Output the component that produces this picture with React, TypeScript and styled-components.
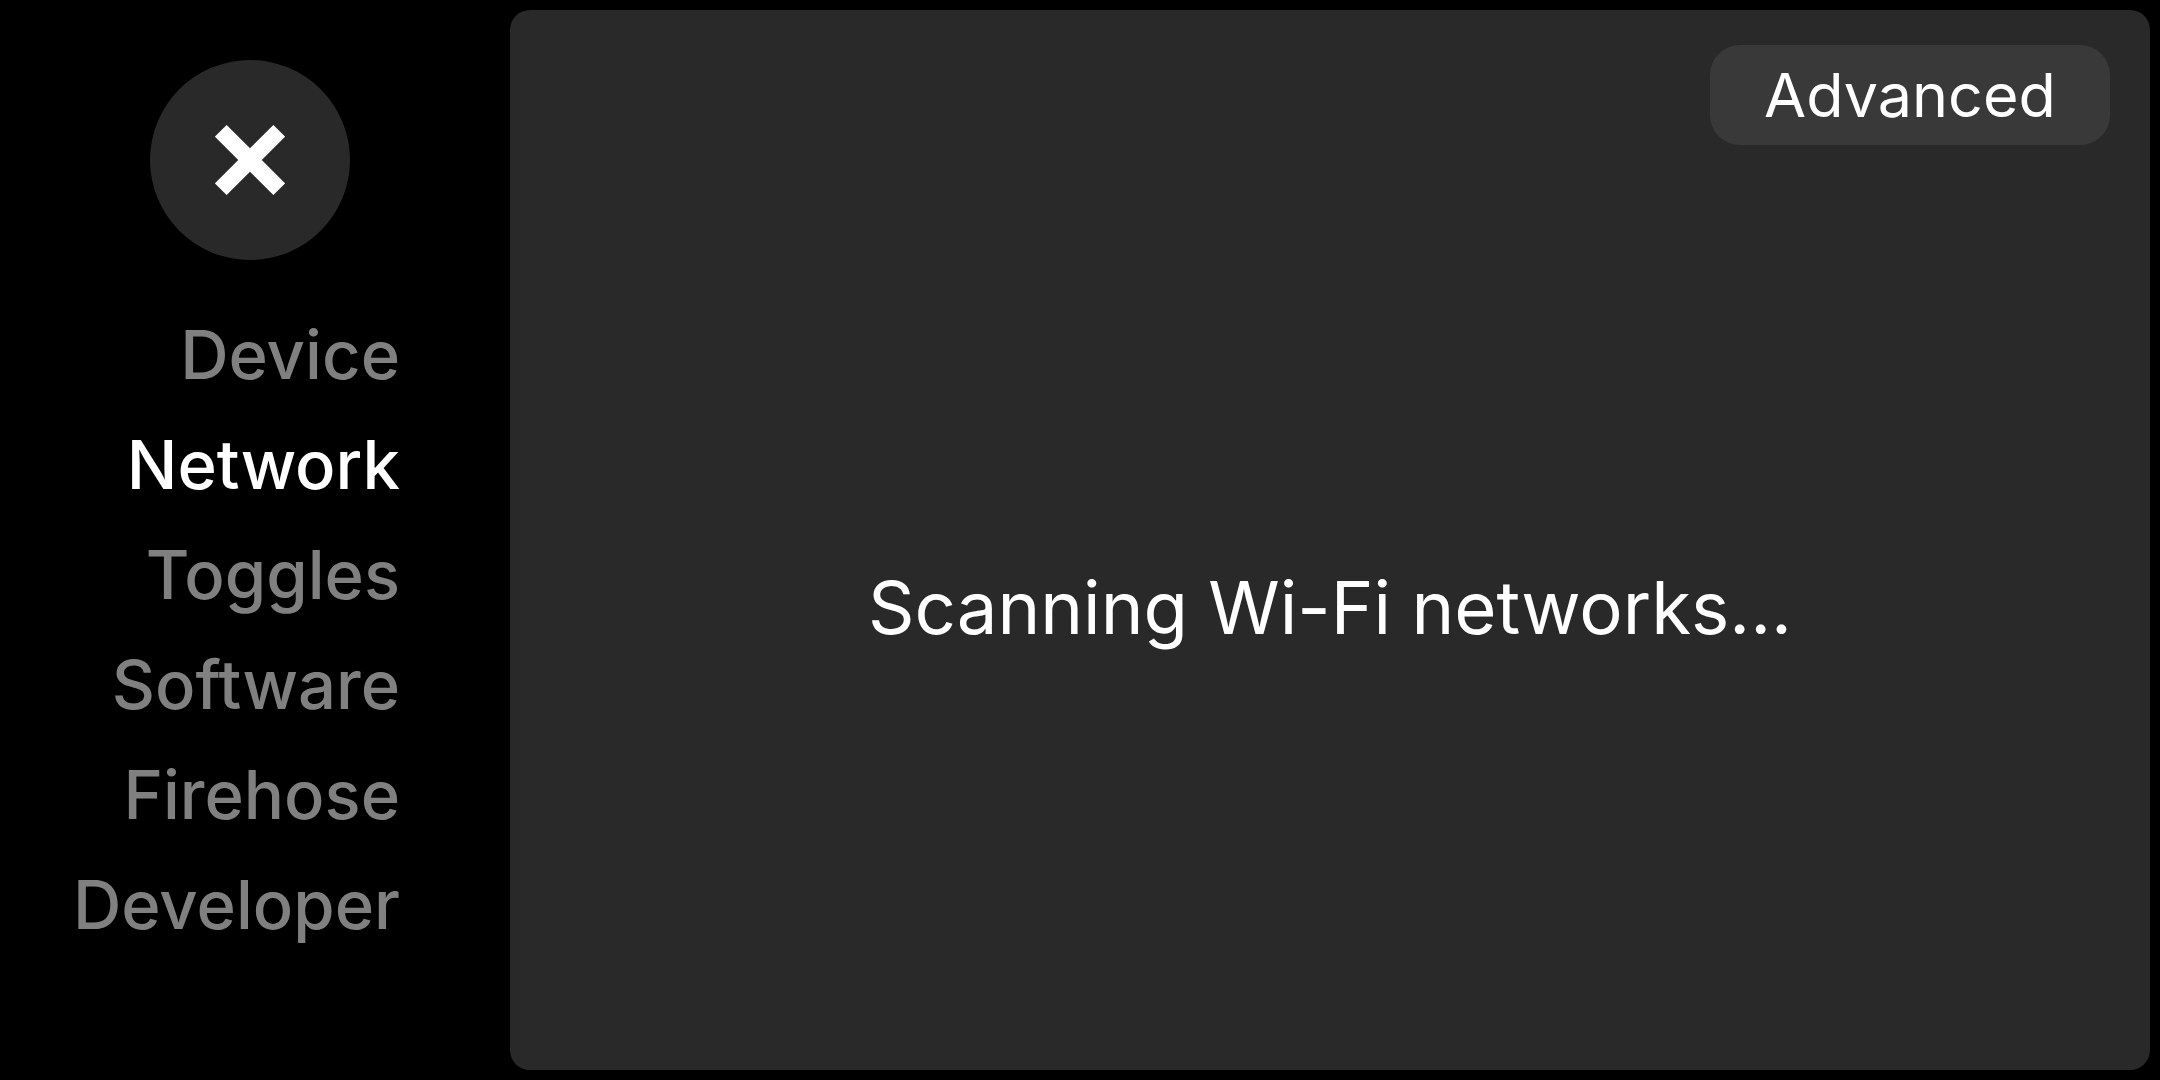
import styled, { createGlobalStyle } from "styled-components";

const GlobalStyle = createGlobalStyle`
  html, body {
    margin: 0;
    padding: 0;
    background: #000;
    font-family: Inter, "Noto Sans", sans-serif;
  }
`;

const NAV_ITEMS = ["Device", "Network", "Toggles", "Software", "Firehose", "Developer"];

const CloseIcon = () => (
  <svg width="70" height="70" viewBox="0 0 70 70">
    <path
      d="M5.8 5.8 L64.2 64.2 M64.2 5.8 L5.8 64.2"
      stroke="#fff"
      strokeWidth="16.5"
      strokeLinecap="butt"
    />
  </svg>
);

const App = () => {
  const active = "Network";

  return (
    <>
      <GlobalStyle />
      <Screen>
        <Sidebar>
          <CloseButton aria-label="Close">
            <CloseIcon />
          </CloseButton>
          <Nav>
            {NAV_ITEMS.map((item) => (
              <NavItem key={item} $active={item === active}>
                {item}
              </NavItem>
            ))}
          </Nav>
        </Sidebar>
        <Panel>
          <PanelHeader>
            <AdvancedButton>Advanced</AdvancedButton>
          </PanelHeader>
          <PanelBody>
            <Status>Scanning Wi-Fi networks...</Status>
          </PanelBody>
        </Panel>
      </Screen>
    </>
  );
};

export default App;

const Screen = styled.div`
  display: flex;
  width: 2160px;
  height: 1080px;
  background: #000;
  box-sizing: border-box;
  padding: 10px 10px 10px 0;
`;

const Sidebar = styled.div`
  width: 510px;
  flex-shrink: 0;
  display: flex;
  flex-direction: column;
  padding-top: 50px;
  box-sizing: border-box;
`;

const CloseButton = styled.button`
  width: 200px;
  height: 200px;
  margin-left: 150px;
  border: none;
  border-radius: 50%;
  background: #292929;
  display: flex;
  align-items: center;
  justify-content: center;
  padding: 0;
  cursor: pointer;
`;

const Nav = styled.div`
  display: flex;
  flex-direction: column;
  align-items: flex-end;
  width: 400px;
  margin-top: 40px;
`;

const NavItem = styled.div<{ $active: boolean }>`
  font-size: 67px;
  font-weight: 500;
  line-height: 110px;
  color: ${(p) => (p.$active ? "#fff" : "#808080")};
  cursor: pointer;
`;

const Panel = styled.div`
  flex: 1;
  display: flex;
  flex-direction: column;
  background: #292929;
  border-radius: 20px;
  padding: 35px 40px 0;
`;

const PanelHeader = styled.div`
  display: flex;
  justify-content: flex-end;
`;

const AdvancedButton = styled.button`
  width: 400px;
  height: 100px;
  border: none;
  border-radius: 30px;
  background: #393939;
  color: #fff;
  font-family: Inter, "Noto Sans", sans-serif;
  font-size: 61px;
  font-weight: 400;
  padding: 0;
  cursor: pointer;
`;

const PanelBody = styled.div`
  flex: 1;
  display: flex;
  align-items: center;
  justify-content: center;
`;

const Status = styled.div`
  color: #fff;
  font-size: 72.5px;
  font-weight: 400;
`;
